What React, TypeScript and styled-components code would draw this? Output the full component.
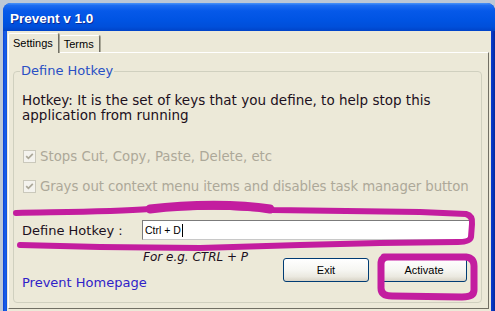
import React from "react";
import styled, { createGlobalStyle } from "styled-components";

const Global = createGlobalStyle`
  html, body {
    margin: 0;
    padding: 0;
    width: 495px;
    height: 311px;
    overflow: hidden;
    background: #bcc8d6;
  }
  #root { height: 311px; }
`;

const Page = styled.div`
  position: relative;
  width: 495px;
  height: 311px;
  overflow: hidden;
  box-sizing: border-box;
  padding: 3px 0 0 3px;
`;

const Window = styled.div`
  width: 492px;
  height: 330px;
  display: flex;
  flex-direction: column;
  border-radius: 8px 8px 0 0;
  overflow: hidden;
  background: linear-gradient(90deg, #0a3fd6 0px, #1a62e8 2px, #0d4ee0 4px, #0b46dc 486px, #0838c8 489px, #062a9c 492px);
`;

const TitleBar = styled.div`
  flex: none;
  height: 28px;
  box-sizing: border-box;
  padding: 8px 0 0 7px;
  background: linear-gradient(180deg, #4a94f8 0%, #1c6cf0 9%, #0659e9 28%, #0054e3 60%, #004fda 85%, #0043c8 100%);
  color: #ffffff;
  font: bold 13.5px/16px "Liberation Sans", Arial, sans-serif;
  text-shadow: 1px 1px 0 #0b2a96;
`;

const Body = styled.div`
  flex: 1;
  margin: 0 4px;
  padding-top: 2px;
  background: #ece9d8;
  display: flex;
  flex-direction: column;
  min-width: 0;
`;

const TabStrip = styled.div`
  display: flex;
  align-items: flex-end;
  height: 19px;
  padding-left: 1px;
`;

const Tab = styled.div<{ $active?: boolean }>`
  position: relative;
  z-index: ${(p) => (p.$active ? 1 : 0)};
  box-sizing: border-box;
  height: ${(p) => (p.$active ? "20px" : "17px")};
  margin-bottom: ${(p) => (p.$active ? "-1px" : "0")};
  padding: ${(p) => (p.$active ? "2px 5px 0 4px" : "1px 5px 0 4px")};
  background: #ece9d8;
  border-top: 1px solid #ffffff;
  border-left: 1px solid #ffffff;
  border-right: 1px solid #716f64;
  border-radius: 2px 2px 0 0;
  box-shadow: 1px 0 0 #a9a797;
  font: 11px/14px "Liberation Sans", Arial, sans-serif;
  color: #000000;
`;

const Panel = styled.div`
  margin: 0 2px 0 1px;
  padding: 10px 6px 5px 4px;
  border: 1px solid;
  border-color: #ffffff #716f64 #716f64 #ffffff;
  min-width: 0;
`;

const Group = styled.fieldset`
  margin: 0;
  min-width: 0;
  box-sizing: border-box;
  height: 240px;
  padding: 0 11px 0 8px;
  border: 1px solid #d0d0bf;
  border-radius: 4px;
  display: flex;
  flex-direction: column;
  font-family: "DejaVu Sans", Verdana, sans-serif;
  color: #1c1020;
`;

const Legend = styled.legend`
  padding: 0 1px;
  margin-left: -2px;
  font: 13px/16px "DejaVu Sans", Verdana, sans-serif;
  color: #2a50c4;
`;

const Description = styled.p`
  margin: 14px 0 0;
  font-size: 13.5px;
  line-height: 15px;
  white-space: nowrap;
`;

const CheckRow = styled.label<{ $gap: number; $tight?: boolean }>`
  display: flex;
  align-items: center;
  gap: 4px;
  margin: ${(p) => p.$gap}px 0 0 1px;
  height: 15px;
  font-size: 13.3px;
  line-height: 15px;
  letter-spacing: ${(p) => (p.$tight ? "-0.1px" : "0")};
  white-space: nowrap;
  color: #aca899;
`;

const CheckBox = styled.span`
  flex: none;
  width: 13px;
  height: 13px;
  box-sizing: border-box;
  border: 1px solid #cac8bb;
  background: #f4f3ee;
  display: flex;
  align-items: center;
  justify-content: center;
`;

const HotkeyRow = styled.div`
  display: flex;
  align-items: center;
  margin-top: 26px;
  height: 20px;
`;

const FieldLabel = styled.span`
  width: 120px;
  flex: none;
  font-size: 13px;
  line-height: 15px;
  white-space: nowrap;
`;

const TextBox = styled.div`
  flex: 1;
  height: 20px;
  box-sizing: border-box;
  border: 1px solid #7b7b7b;
  border-right-color: #b8b8b8;
  border-bottom-color: #c8c8c8;
  background: #ffffff;
  display: flex;
  align-items: center;
  padding-left: 2px;
  font: 10.5px/13px "Liberation Sans", Arial, sans-serif;
  color: #000000;
`;

const Caret = styled.span`
  display: inline-block;
  width: 1px;
  height: 13px;
  margin-left: 1px;
  background: #000000;
`;

const Footer = styled.div`
  display: flex;
  justify-content: space-between;
  margin-top: 10px;
`;

const LeftCol = styled.div`
  display: flex;
  flex-direction: column;
  gap: 10px;
`;

const Hint = styled.span`
  margin-left: 121px;
  font-size: 12px;
  line-height: 15px;
  font-style: italic;
`;

const Link = styled.a`
  font-size: 13px;
  line-height: 15px;
  color: #2f22c8;
  text-decoration: none;
`;

const Buttons = styled.div`
  display: flex;
  gap: 12px;
  margin: 8px 3px 0 0;
  align-self: flex-start;
`;

const Button = styled.button`
  width: 86px;
  height: 24px;
  box-sizing: border-box;
  padding: 0;
  border: 1px solid #003c74;
  border-radius: 3px;
  background: linear-gradient(180deg, #ffffff 0%, #f6f6f2 50%, #ebe9e0 80%, #d8d3c6 100%);
  font: 11px "Liberation Sans", Arial, sans-serif;
  color: #000000;
`;

const Annotation = styled.svg`
  position: absolute;
  left: 0;
  top: 0;
  pointer-events: none;
`;

const Check = () => (
  <svg width="9" height="9" viewBox="0 0 9 9">
    <path d="M1.2 4.2 L3.4 6.4 L7.8 1.8" fill="none" stroke="#aca899" strokeWidth="1.7" />
  </svg>
);

export default function App() {
  return (
    <>
      <Global />
      <Page>
        <Window>
          <TitleBar>Prevent v 1.0</TitleBar>
          <Body>
            <TabStrip>
              <Tab $active>Settings</Tab>
              <Tab>Terms</Tab>
            </TabStrip>
            <Panel>
              <Group>
                <Legend>Define Hotkey</Legend>
                <Description>
                  Hotkey: It is the set of keys that you define, to help stop this
                  <br />
                  application from running
                </Description>
                <CheckRow $gap={26}>
                  <CheckBox>
                    <Check />
                  </CheckBox>
                  Stops Cut, Copy, Paste, Delete, etc
                </CheckRow>
                <CheckRow $gap={15} $tight>
                  <CheckBox>
                    <Check />
                  </CheckBox>
                  Grays out context menu items and disables task manager button
                </CheckRow>
                <HotkeyRow>
                  <FieldLabel>Define Hotkey :</FieldLabel>
                  <TextBox>
                    Ctrl + D
                    <Caret />
                  </TextBox>
                </HotkeyRow>
                <Footer>
                  <LeftCol>
                    <Hint>For e.g. CTRL + P</Hint>
                    <Link href="#">Prevent Homepage</Link>
                  </LeftCol>
                  <Buttons>
                    <Button>Exit</Button>
                    <Button>Activate</Button>
                  </Buttons>
                </Footer>
              </Group>
            </Panel>
          </Body>
        </Window>
        <Annotation width="495" height="311" viewBox="0 0 495 311">
          <g fill="none" stroke="#c31d9f" strokeLinecap="round" strokeLinejoin="round">
            <path
              d="M16 213 C 60 212, 110 212, 150 209 C 190 206, 240 206, 272 210 L 420 212 L 466 214 Q 473 216 472 224 L 471 237 Q 470 242 458 242 L 380 243 L 300 245 L 200 248 L 100 247 L 20 245"
              strokeWidth="6"
            />
            <path d="M150 209 C 190 204, 240 204, 270 209" strokeWidth="9" />
            <path
              d="M384 257 L 466 257 Q 474 258 474 266 L 474 290 Q 474 297 462 297 L 392 296 Q 381 296 381 288 L 381 264 Q 381 257 388 257"
              strokeWidth="7"
            />
          </g>
        </Annotation>
      </Page>
    </>
  );
}
